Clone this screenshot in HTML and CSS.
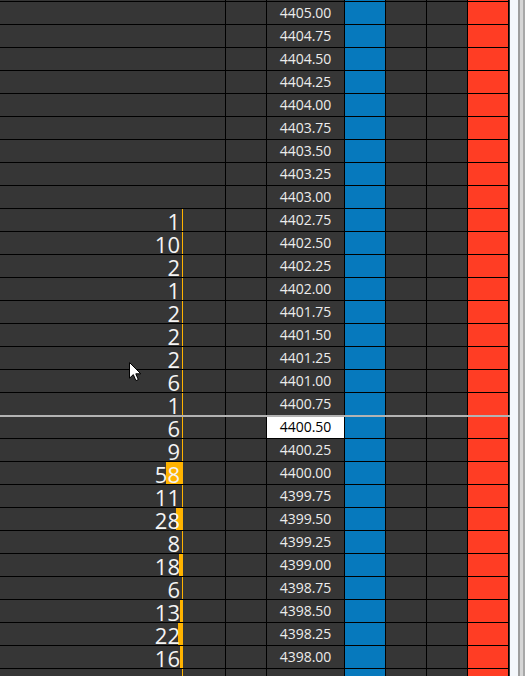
FILE: index.html
```html
<!DOCTYPE html>
<html lang="en">
<head>
    <meta charset="UTF-8">
    <meta name="viewport" content="width=device-width, initial-scale=1.0">
    <title>DOM</title>
    <link rel="stylesheet" href="styles.css">
</head>
<body>
    <div class="ladder">
        <div class="row"><div class="vol"></div><div class="gap"></div><div class="c"></div><div class="price"></div><div class="bid"></div><div class="c"></div><div class="c"></div><div class="ask"></div></div>
        <div class="row"><div class="vol"></div><div class="gap"></div><div class="c"></div><div class="price">4405.00</div><div class="bid"></div><div class="c"></div><div class="c"></div><div class="ask"></div></div>
        <div class="row"><div class="vol"></div><div class="gap"></div><div class="c"></div><div class="price">4404.75</div><div class="bid"></div><div class="c"></div><div class="c"></div><div class="ask"></div></div>
        <div class="row"><div class="vol"></div><div class="gap"></div><div class="c"></div><div class="price">4404.50</div><div class="bid"></div><div class="c"></div><div class="c"></div><div class="ask"></div></div>
        <div class="row"><div class="vol"></div><div class="gap"></div><div class="c"></div><div class="price">4404.25</div><div class="bid"></div><div class="c"></div><div class="c"></div><div class="ask"></div></div>
        <div class="row"><div class="vol"></div><div class="gap"></div><div class="c"></div><div class="price">4404.00</div><div class="bid"></div><div class="c"></div><div class="c"></div><div class="ask"></div></div>
        <div class="row"><div class="vol"></div><div class="gap"></div><div class="c"></div><div class="price">4403.75</div><div class="bid"></div><div class="c"></div><div class="c"></div><div class="ask"></div></div>
        <div class="row"><div class="vol"></div><div class="gap"></div><div class="c"></div><div class="price">4403.50</div><div class="bid"></div><div class="c"></div><div class="c"></div><div class="ask"></div></div>
        <div class="row"><div class="vol"></div><div class="gap"></div><div class="c"></div><div class="price">4403.25</div><div class="bid"></div><div class="c"></div><div class="c"></div><div class="ask"></div></div>
        <div class="row"><div class="vol"></div><div class="gap"></div><div class="c"></div><div class="price">4403.00</div><div class="bid"></div><div class="c"></div><div class="c"></div><div class="ask"></div></div>
        <div class="row"><div class="vol"><i class="bar" style="width:1px"></i><span>1</span></div><div class="gap"></div><div class="c"></div><div class="price">4402.75</div><div class="bid"></div><div class="c"></div><div class="c"></div><div class="ask"></div></div>
        <div class="row"><div class="vol"><i class="bar" style="width:1px"></i><span>10</span></div><div class="gap"></div><div class="c"></div><div class="price">4402.50</div><div class="bid"></div><div class="c"></div><div class="c"></div><div class="ask"></div></div>
        <div class="row"><div class="vol"><i class="bar" style="width:1px"></i><span>2</span></div><div class="gap"></div><div class="c"></div><div class="price">4402.25</div><div class="bid"></div><div class="c"></div><div class="c"></div><div class="ask"></div></div>
        <div class="row"><div class="vol"><i class="bar" style="width:1px"></i><span>1</span></div><div class="gap"></div><div class="c"></div><div class="price">4402.00</div><div class="bid"></div><div class="c"></div><div class="c"></div><div class="ask"></div></div>
        <div class="row"><div class="vol"><i class="bar" style="width:1px"></i><span>2</span></div><div class="gap"></div><div class="c"></div><div class="price">4401.75</div><div class="bid"></div><div class="c"></div><div class="c"></div><div class="ask"></div></div>
        <div class="row"><div class="vol"><i class="bar" style="width:1px"></i><span>2</span></div><div class="gap"></div><div class="c"></div><div class="price">4401.50</div><div class="bid"></div><div class="c"></div><div class="c"></div><div class="ask"></div></div>
        <div class="row"><div class="vol"><i class="bar" style="width:1px"></i><span>2</span></div><div class="gap"></div><div class="c"></div><div class="price">4401.25</div><div class="bid"></div><div class="c"></div><div class="c"></div><div class="ask"></div></div>
        <div class="row"><div class="vol"><i class="bar" style="width:1px"></i><span>6</span></div><div class="gap"></div><div class="c"></div><div class="price">4401.00</div><div class="bid"></div><div class="c"></div><div class="c"></div><div class="ask"></div></div>
        <div class="row"><div class="vol"><i class="bar" style="width:1px"></i><span>1</span></div><div class="gap"></div><div class="c"></div><div class="price">4400.75</div><div class="bid"></div><div class="c"></div><div class="c"></div><div class="ask"></div></div>
        <div class="row current"><div class="vol"><i class="bar" style="width:1px"></i><span>6</span></div><div class="gap"></div><div class="c"></div><div class="price">4400.50</div><div class="bid"></div><div class="c"></div><div class="c"></div><div class="ask"></div></div>
        <div class="row"><div class="vol"><i class="bar" style="width:1px"></i><span>9</span></div><div class="gap"></div><div class="c"></div><div class="price">4400.25</div><div class="bid"></div><div class="c"></div><div class="c"></div><div class="ask"></div></div>
        <div class="row"><div class="vol"><i class="bar" style="width:17px"></i><span>58</span></div><div class="gap"></div><div class="c"></div><div class="price">4400.00</div><div class="bid"></div><div class="c"></div><div class="c"></div><div class="ask"></div></div>
        <div class="row"><div class="vol"><i class="bar" style="width:1px"></i><span>11</span></div><div class="gap"></div><div class="c"></div><div class="price">4399.75</div><div class="bid"></div><div class="c"></div><div class="c"></div><div class="ask"></div></div>
        <div class="row"><div class="vol"><i class="bar" style="width:7px"></i><span>28</span></div><div class="gap"></div><div class="c"></div><div class="price">4399.50</div><div class="bid"></div><div class="c"></div><div class="c"></div><div class="ask"></div></div>
        <div class="row"><div class="vol"><i class="bar" style="width:1px"></i><span>8</span></div><div class="gap"></div><div class="c"></div><div class="price">4399.25</div><div class="bid"></div><div class="c"></div><div class="c"></div><div class="ask"></div></div>
        <div class="row"><div class="vol"><i class="bar" style="width:4px"></i><span>18</span></div><div class="gap"></div><div class="c"></div><div class="price">4399.00</div><div class="bid"></div><div class="c"></div><div class="c"></div><div class="ask"></div></div>
        <div class="row"><div class="vol"><i class="bar" style="width:1px"></i><span>6</span></div><div class="gap"></div><div class="c"></div><div class="price">4398.75</div><div class="bid"></div><div class="c"></div><div class="c"></div><div class="ask"></div></div>
        <div class="row"><div class="vol"><i class="bar" style="width:3px"></i><span>13</span></div><div class="gap"></div><div class="c"></div><div class="price">4398.50</div><div class="bid"></div><div class="c"></div><div class="c"></div><div class="ask"></div></div>
        <div class="row"><div class="vol"><i class="bar" style="width:5px"></i><span>22</span></div><div class="gap"></div><div class="c"></div><div class="price">4398.25</div><div class="bid"></div><div class="c"></div><div class="c"></div><div class="ask"></div></div>
        <div class="row"><div class="vol"><i class="bar" style="width:3px"></i><span>16</span></div><div class="gap"></div><div class="c"></div><div class="price">4398.00</div><div class="bid"></div><div class="c"></div><div class="c"></div><div class="ask"></div></div>
        <div class="row"><div class="vol"><i class="bar" style="width:1px"></i></div><div class="gap"></div><div class="c"></div><div class="price"></div><div class="bid"></div><div class="c"></div><div class="c"></div><div class="ask"></div></div>
    </div>
    <div class="scroll"></div>

    <svg class="cursor" width="14" height="20" viewBox="0 0 14 20">
        <path d="M0.5 0.5 V16.2 L4.3 12.6 L6.9 18.6 L9.3 17.6 L6.8 11.8 H11.8 Z" fill="#fff" stroke="#000" stroke-width="1" stroke-linejoin="miter"/>
    </svg>
</body>
</html>
```

FILE: styles.css
```css
:root {
    --cell: #363636;
    --line: #000;
    --bid: #0679bd;
    --ask: #ff3d24;
    --volume: #ffb300;
}

* {
    box-sizing: border-box;
}

body {
    margin: 0;
    width: 525px;
    height: 676px;
    overflow: hidden;
    display: flex;
    align-items: flex-start;
    background: var(--cell);
    font-family: 'Open Sans', 'Noto Sans', sans-serif;
}

.ladder {
    width: 510px;
    flex: none;
    margin-top: -21px;
    background: var(--cell);
}

.row {
    display: flex;
    width: 509px;
    height: 23px;
    border-bottom: 1px solid var(--line);
}

.row > div {
    height: 22px;
    flex: none;
}

.vol {
    width: 183px;
    position: relative;
    text-align: right;
    padding: 2px 3px 0 0;
    font-size: 22px;
    line-height: 20px;
    color: #f4f4f4;
}

.vol span {
    position: relative;
}

.bar {
    position: absolute;
    top: 0;
    right: 0;
    bottom: 0;
    background: var(--volume);
}

.gap {
    width: 43px;
    border-right: 1px solid var(--line);
}

.c,
.bid,
.ask {
    width: 41px;
    border-right: 1px solid var(--line);
}

.bid {
    background: var(--bid);
}

.ask {
    background: var(--ask);
}

.price {
    width: 78px;
    border-right: 1px solid var(--line);
    text-align: center;
    font-size: 14px;
    line-height: 22px;
    color: #ececec;
}

.current {
    position: relative;
}

.current::before {
    content: "";
    position: absolute;
    left: 0;
    top: -1px;
    width: 510px;
    height: 2px;
    background: #b3b3b3;
    z-index: 2;
}

.current .price {
    background: #fff;
    color: #000;
}

.scroll {
    width: 15px;
    height: 676px;
    flex: none;
    background: linear-gradient(to right, #f4f7fb 0 8px, #9e9e9e 8px 10px, #d6d6d6 10px 13px, #a8a8a8 13px);
}

.cursor {
    position: absolute;
    left: 129px;
    top: 362px;
}
```
